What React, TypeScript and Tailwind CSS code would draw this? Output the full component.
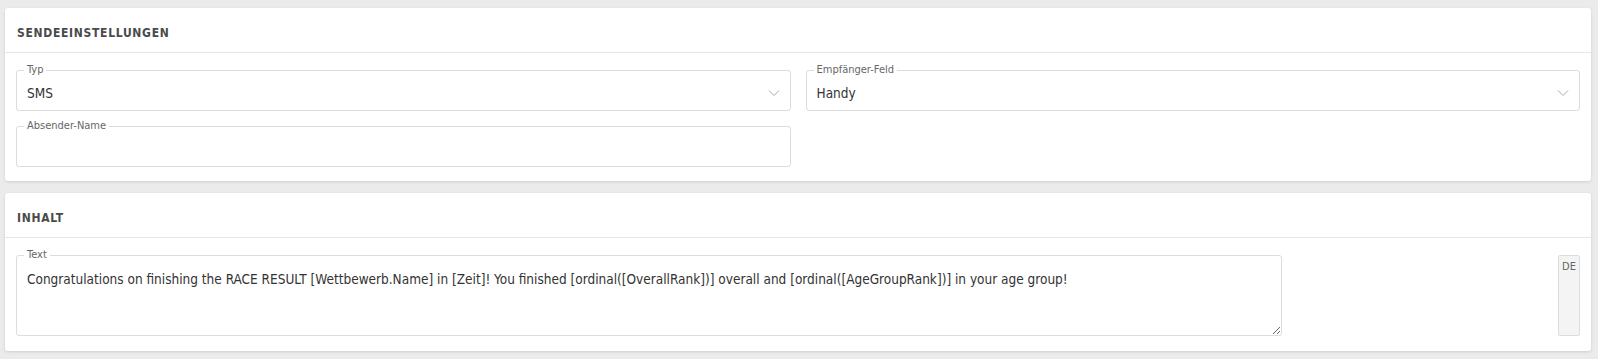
import type { ReactNode } from 'react';

const font = { fontFamily: '"DejaVu Sans Condensed", "Liberation Sans", sans-serif' };

const Chevron = () => (
  <svg width="12" height="8" viewBox="0 0 12 8" className="shrink-0">
    <path d="M1 1.5 L6 6.5 L11 1.5" fill="none" stroke="#a8a8a8" strokeWidth="1" />
  </svg>
);

const Field = ({ label, value, select }: { label: string; value?: string; select?: boolean }) => (
  <fieldset className="rounded-[3px] border border-[#dcdcdc] px-[10px] pb-[4px]">
    <legend className="-ml-[3px] px-[3px] text-[11px] leading-[14px] text-[#666]">{label}</legend>
    <div className="flex h-[29px] items-center justify-between pt-[3px] text-[13.5px] text-[#333]">
      <span>{value}</span>
      {select && <Chevron />}
    </div>
  </fieldset>
);

const Card = ({ title, children }: { title: string; children: ReactNode }) => (
  <section className="rounded-[3px] bg-white shadow-[0_1px_3px_rgba(0,0,0,0.12)]">
    <div className="flex h-[45px] items-center border-b border-[#e6e6e6] px-[12px] pt-[6px]">
      <h2 className="text-[12px] font-bold tracking-[0.7px] text-[#4a4a4a]">{title}</h2>
    </div>
    {children}
  </section>
);

const text =
  'Congratulations on finishing the RACE RESULT [Wettbewerb.Name] in [Zeit]! You finished [ordinal([OverallRank])] overall and [ordinal([AgeGroupRank])] in your age group!';

export default function App() {
  return (
    <div className="min-h-[359px] bg-[#ebebeb] pl-[5px] pr-[7px] pt-[8px]" style={font}>
      <div className="flex flex-col gap-[12px]">
        <Card title="SENDEEINSTELLUNGEN">
          <div className="grid grid-cols-2 gap-x-[15px] gap-y-[8px] px-[11px] pb-[14px] pt-[10px]">
            <Field label="Typ" value="SMS" select />
            <Field label="Empfänger-Feld" value="Handy" select />
            <Field label="Absender-Name" />
          </div>
        </Card>
        <Card title="INHALT">
          <div className="flex items-start justify-between px-[11px] pb-[15px] pt-[10px]">
            <fieldset className="w-[1266px] rounded-[3px] border border-[#dcdcdc]">
              <legend className="ml-[7px] px-[3px] text-[11px] leading-[14px] text-[#666]">Text</legend>
              <textarea
                readOnly
                value={text}
                className="block h-[73px] w-full resize-y bg-transparent px-[10px] pt-[8px] text-[13.5px] leading-[18px] text-[#333] outline-none"
                style={font}
              />
            </fieldset>
            <div className="mt-[7px] h-[81px] w-[22px] rounded-[2px] border border-[#dcdcdc] bg-[#f4f4f4] pt-[4px] text-center text-[11px] leading-[14px] text-[#666]">
              DE
            </div>
          </div>
        </Card>
      </div>
    </div>
  );
}
